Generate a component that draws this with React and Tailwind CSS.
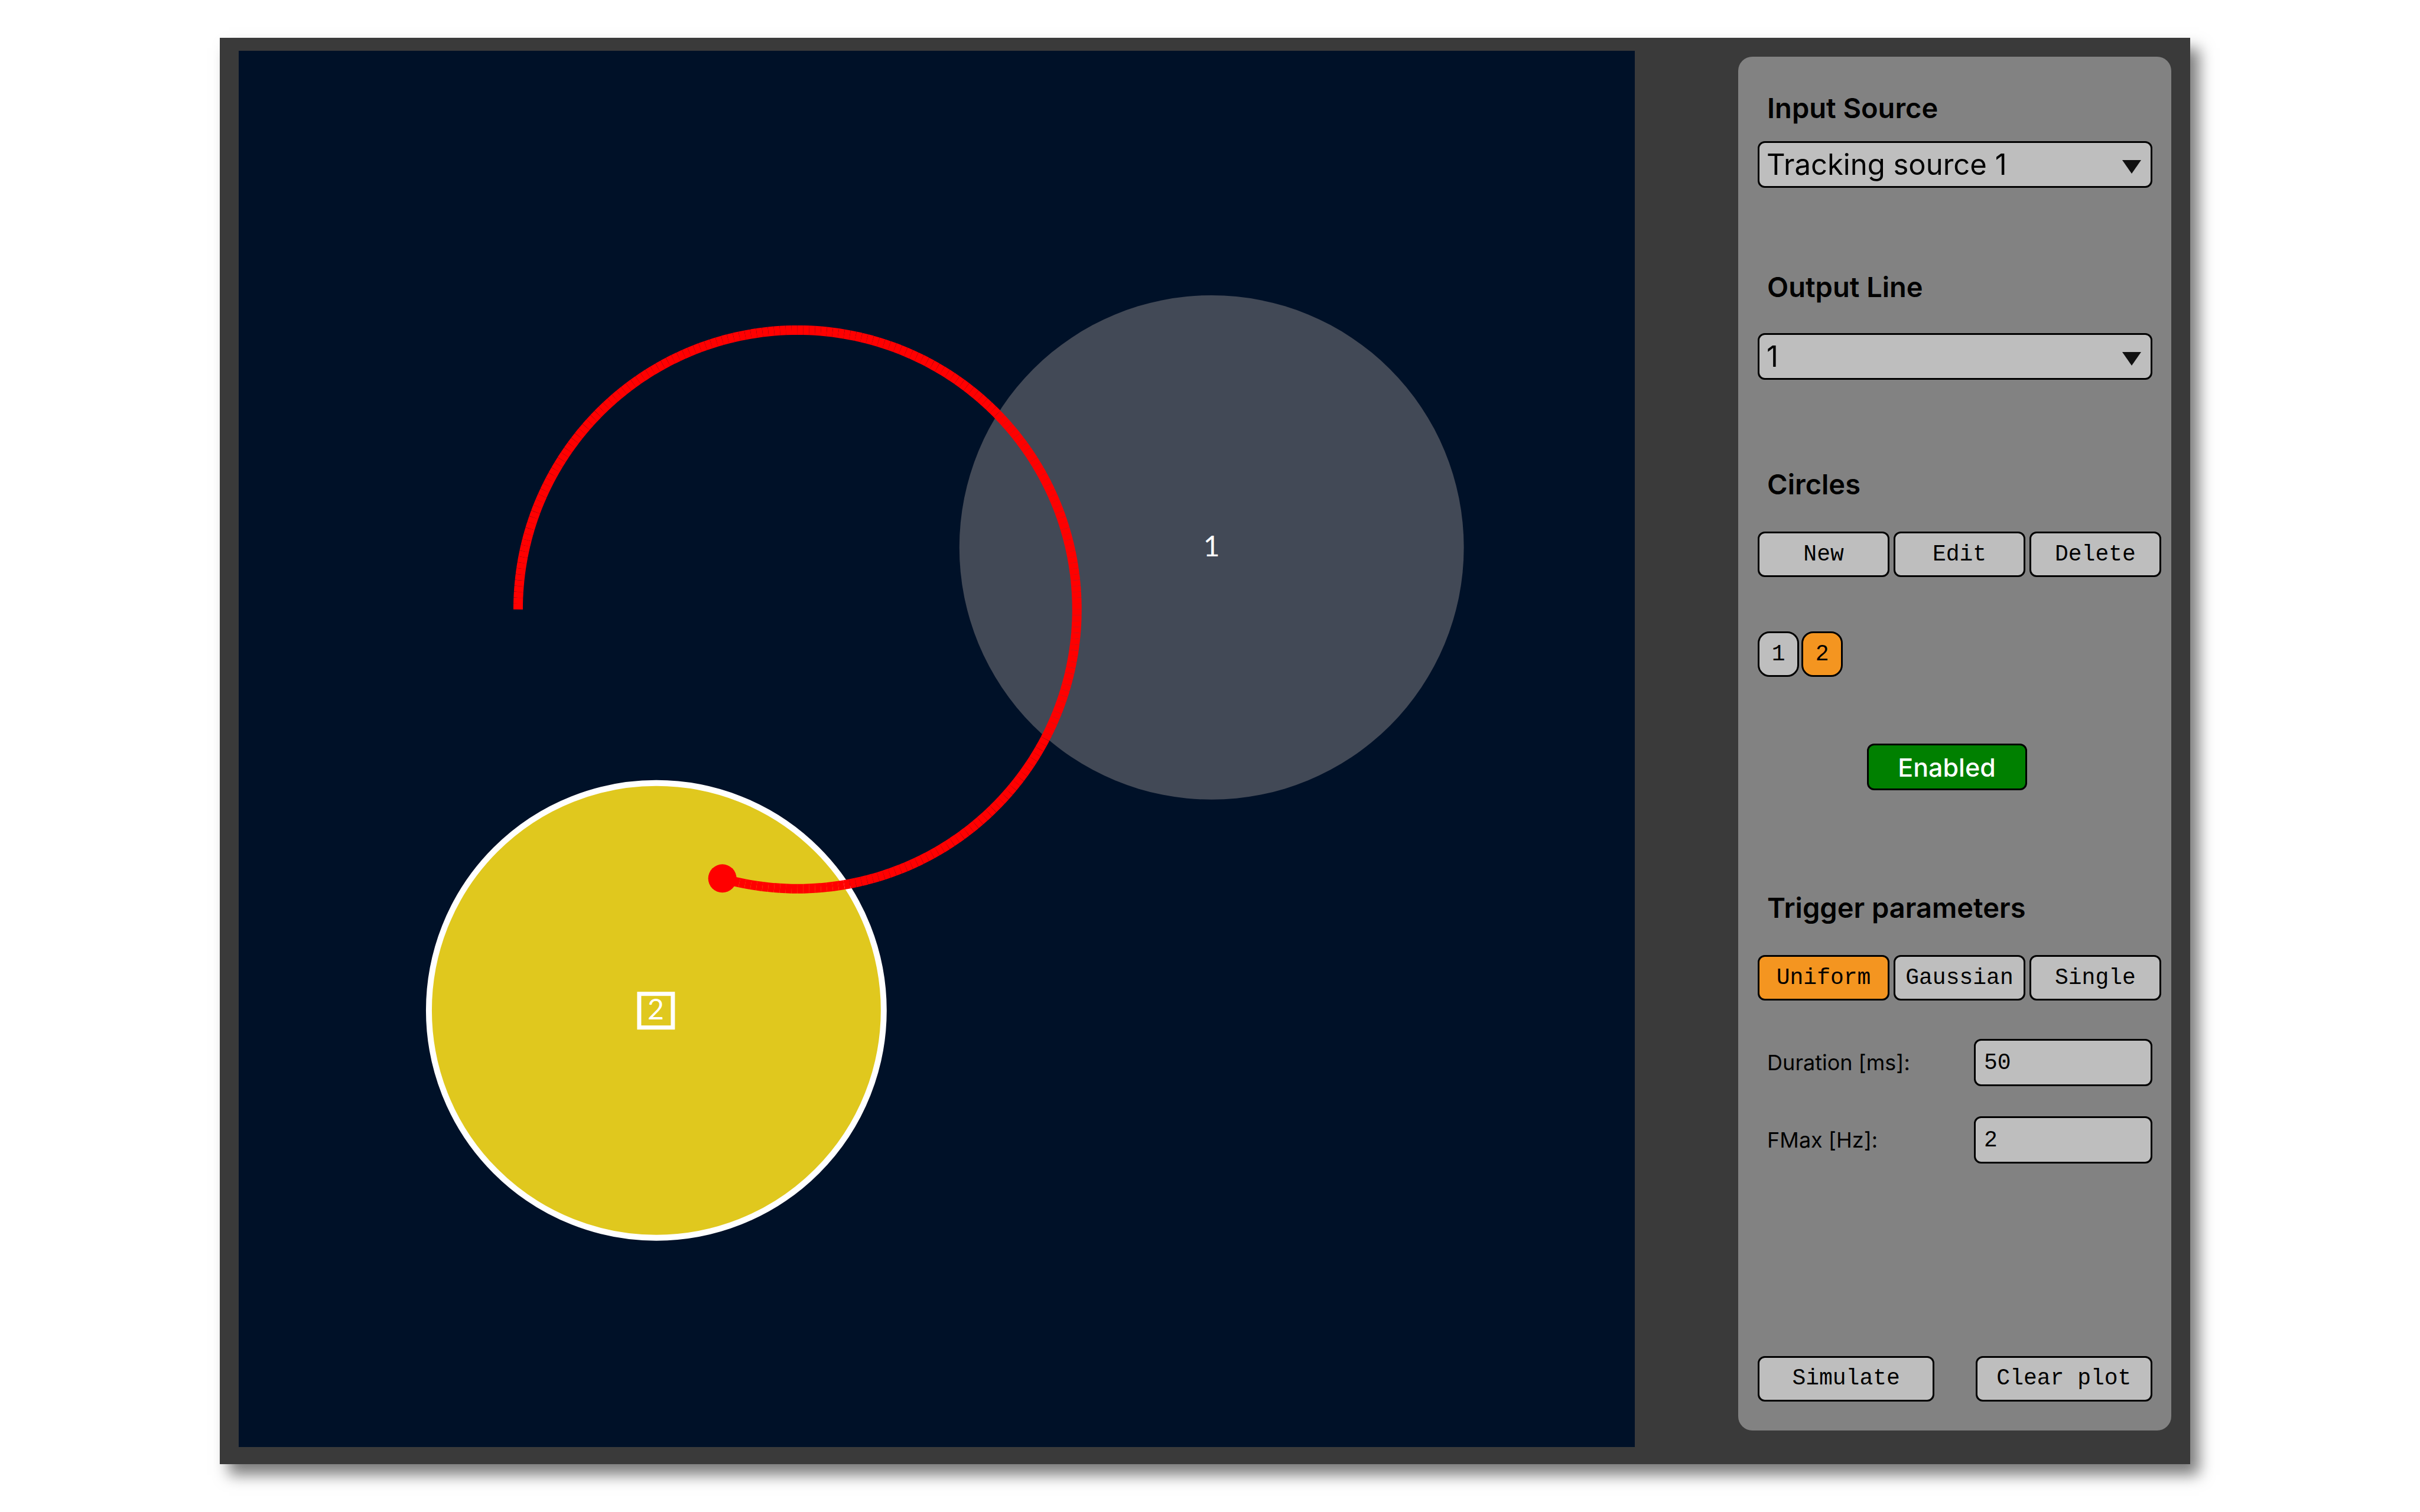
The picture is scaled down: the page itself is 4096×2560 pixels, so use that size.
import React from "react";

const TRACK_STEPS = 238;
const STEP_DEG = 1.2;

function point(i) {
  const a = ((180 + i * STEP_DEG) * Math.PI) / 180;
  return [946 + 473 * Math.cos(a), 946 + 473 * Math.sin(a)];
}

const SEGMENTS = Array.from({ length: TRACK_STEPS }, (_, i) => {
  const [x1, y1] = point(i);
  const [x2, y2] = point(i + 1);
  return { x1, y1, x2, y2 };
});

function Plot() {
  const [hx, hy] = point(TRACK_STEPS);
  return (
    <svg viewBox="0 0 2364 2364" className="block aspect-square w-[72.25%] self-start bg-[#001128]" role="img" aria-label="Tracking plot">
      <circle cx="1647" cy="841" r="427" fill="#424956" />
      <circle cx="707" cy="1625" r="385" fill="#e0c81e" stroke="#fff" strokeWidth="10" />
      <rect x="678" y="1597" width="57" height="57" fill="none" stroke="#fff" strokeWidth="7" />
      <g fill="#fff" fontFamily='Lato, "Open Sans", sans-serif' fontSize="48" textAnchor="middle">
        <text x="1647" y="856">1</text>
        <text x="706" y="1640">2</text>
      </g>
      <g stroke="#f00" strokeWidth="16">
        {SEGMENTS.map((s, i) => (
          <line key={i} {...s} />
        ))}
      </g>
      <circle cx={hx} cy={hy} r="24" fill="#f00" />
    </svg>
  );
}

const mono = 'font-["Liberation_Mono",monospace] text-[38px] leading-[48px]';
const box = "border-[3px] border-black rounded-[12px]";

function Button({ className = "", active = false, children }) {
  return (
    <button
      type="button"
      className={`flex h-[77px] items-center justify-center ${mono} ${box} ${active ? "bg-[#f49520]" : "bg-[#bebebe]"} ${className}`}
    >
      {children}
    </button>
  );
}

function Heading({ htmlFor, children }) {
  const cls = "block pl-4 text-[47px] leading-[56px] font-semibold";
  return htmlFor ? (
    <label htmlFor={htmlFor} className={cls}>{children}</label>
  ) : (
    <h2 className={cls}>{children}</h2>
  );
}

function Select({ id, children }) {
  return (
    <div className="relative">
      <select id={id} className={`block h-[79px] w-full appearance-none bg-[#bebebe] pl-[12px] text-[49px] leading-[60px] ${box}`}>
        {children}
      </select>
      <svg viewBox="0 0 32 23" className="pointer-events-none absolute top-[32px] right-[19px] w-[32px]" aria-hidden="true">
        <path d="M0 0h32L16 23z" fill="#111" />
      </svg>
    </div>
  );
}

function Field({ id, label, value }) {
  return (
    <div className="flex items-center justify-between">
      <label htmlFor={id} className="pl-4 text-[36px] leading-[44px]">{label}</label>
      <input id={id} defaultValue={value} className={`block h-[80px] w-[302px] bg-[#bebebe] px-[14px] ${mono} ${box}`} />
    </div>
  );
}

export default function App() {
  return (
    <main className='min-h-screen bg-white pt-[64px] pr-[9.5%] pl-[9.07%] font-["Inter",sans-serif] text-black'>
      <div className="flex items-stretch justify-between bg-[#3a3a3a] px-[32px] pt-[22px] pb-[29px] shadow-[15px_18px_24px_0px_rgba(0,0,0,0.52)]">
        <Plot />
        <aside className="mt-[10px] mb-[28px] flex w-[22.4%] flex-col rounded-[24px] bg-[#828282] pt-[59px] pr-[32px] pb-[49px] pl-[33px]">
          <Heading htmlFor="source">Input Source</Heading>
          <div className="mt-[28px]">
            <Select id="source"><option>Tracking source 1</option></Select>
          </div>
          <div className="mt-[140px]"><Heading htmlFor="line">Output Line</Heading></div>
          <div className="mt-[50px]">
            <Select id="line"><option>1</option></Select>
          </div>
          <div className="mt-[149px]"><Heading>Circles</Heading></div>
          <div className="mt-[52px] mr-[-15px] flex gap-[7px]">
            <Button className="flex-1">New</Button>
            <Button className="flex-1">Edit</Button>
            <Button className="flex-1">Delete</Button>
          </div>
          <div className="mt-[92px] flex gap-1">
            <Button className="w-[70px] rounded-[20px]">1</Button>
            <Button className="w-[70px] rounded-[20px]" active>2</Button>
          </div>
          <button type="button" className={`mt-[113px] mr-7 h-[79px] w-[271px] self-center bg-[#008000] text-[43px] leading-[56px] font-medium text-white ${box}`}>
            Enabled
          </button>
          <div className="mt-[171px]"><Heading>Trigger parameters</Heading></div>
          <div className="mt-[52px] mr-[-15px] flex gap-[7px]">
            <Button className="flex-1" active>Uniform</Button>
            <Button className="flex-1">Gaussian</Button>
            <Button className="flex-1">Single</Button>
          </div>
          <div className="mt-[65px] flex flex-col gap-[51px]">
            <Field id="duration" label="Duration [ms]:" value="50" />
            <Field id="fmax" label="FMax [Hz]:" value="2" />
          </div>
          <div className="mt-auto flex justify-between">
            <Button className="w-[299px]">Simulate</Button>
            <Button className="w-[299px]">Clear plot</Button>
          </div>
        </aside>
      </div>
    </main>
  );
}
